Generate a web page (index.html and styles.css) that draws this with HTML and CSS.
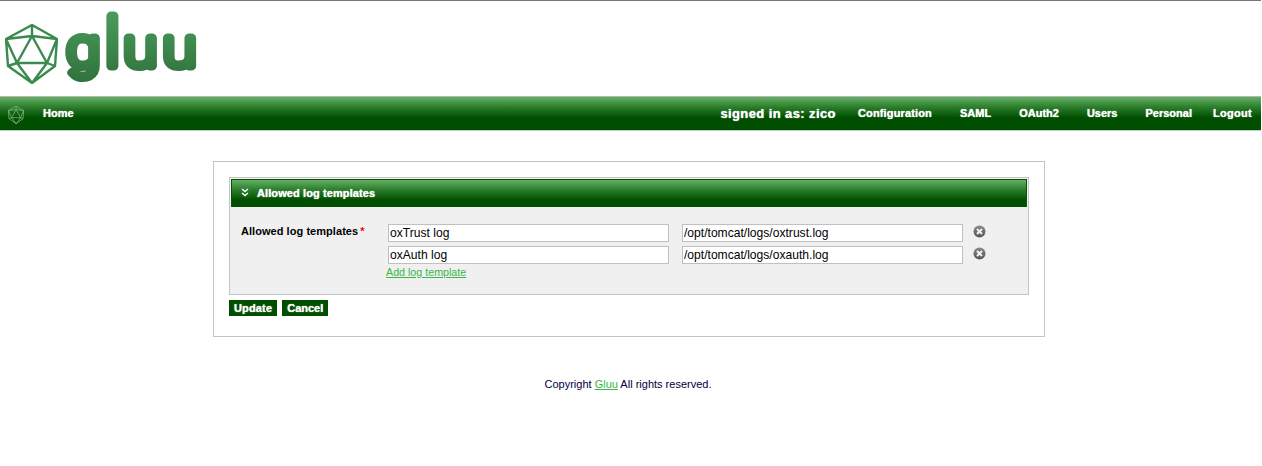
FILE: index.html
```html
<!DOCTYPE html>
<html lang="en">
<head>
<meta charset="utf-8">
<title>Gluu</title>
<link rel="stylesheet" href="styles.css">
</head>
<body>
<svg class="defs" width="0" height="0" aria-hidden="true">
  <defs>
    <linearGradient id="logoGrad" gradientUnits="userSpaceOnUse" x1="0" y1="10" x2="0" y2="86">
      <stop offset="0" stop-color="#4a9c5c"/>
      <stop offset="1" stop-color="#2f6f3a"/>
    </linearGradient>
    <linearGradient id="delGrad" x1="0" y1="0" x2="0" y2="1">
      <stop offset="0" stop-color="#8a8a8a"/>
      <stop offset="1" stop-color="#555"/>
    </linearGradient>
    <symbol id="ico" viewBox="5 23 53 60">
      <path d="M32 24 57 38 55 65 32 82 8 65 6 38Z M32 24V35 M6 38 32 35 57 38 M32 35 17 62H47L32 35 M6 38 17 62 8 65 M57 38 47 62 55 65 M17 62 32 82 47 62" fill="none" stroke="currentColor" stroke-linejoin="round"/>
    </symbol>
    <symbol id="del" viewBox="0 0 13 13">
      <circle cx="6.500" cy="6.500" r="6" fill="url(#delGrad)"/>
      <path d="M4 4 9 9M9 4 4 9" stroke="#f2f2f2" stroke-width="2"/>
    </symbol>
  </defs>
</svg>
<div class="page">
  <header class="brand">
    <svg class="brand-icon" width="53" height="60"><use href="#ico"/></svg>
    <svg class="brand-word" width="145" height="95" viewBox="0 0 145 95">
      <text x="6 40 57 92" y="65" transform="scale(1.12 1)" class="brand-text">g<tspan class="brand-l">l</tspan>uu</text>
    </svg>
  </header>
  <nav class="nav">
    <svg class="nav-icon" width="16" height="18"><use href="#ico"/></svg>
    <a class="nav-link home" href="#">Home</a>
    <span class="signed">signed in as: zico</span>
    <a class="nav-link cfg" href="#">Configuration</a>
    <a class="nav-link" href="#">SAML</a>
    <a class="nav-link" href="#">OAuth2</a>
    <a class="nav-link" href="#">Users</a>
    <a class="nav-link" href="#">Personal</a>
    <a class="nav-link logout" href="#">Logout</a>
  </nav>
  <main class="panel">
    <section class="box">
      <h2 class="box-head">
        <svg class="chev" width="8" height="9" viewBox="0 0 8 9"><path d="M1 1 4 3.500 7 1M1 5 4 7.500 7 5" fill="none" stroke="#fff" stroke-width="1.400"/></svg>
        Allowed log templates
      </h2>
      <div class="box-body">
        <label class="field-label">Allowed log templates<span class="req">*</span></label>
        <div class="rows">
          <div class="row">
            <input class="text-input" type="text" value="oxTrust log">
            <input class="text-input" type="text" value="/opt/tomcat/logs/oxtrust.log">
            <svg class="del" width="13" height="13"><use href="#del"/></svg>
          </div>
          <div class="row">
            <input class="text-input" type="text" value="oxAuth log">
            <input class="text-input" type="text" value="/opt/tomcat/logs/oxauth.log">
            <svg class="del" width="13" height="13"><use href="#del"/></svg>
          </div>
          <a class="add-link" href="#">Add log template</a>
        </div>
      </div>
    </section>
    <div class="actions">
      <button class="btn" type="button">Update</button>
      <button class="btn" type="button">Cancel</button>
    </div>
  </main>
  <footer class="foot">Copyright <a href="#">Gluu</a> All rights reserved.</footer>
</div>
</body>
</html>
```
FILE: styles.css
```css
* { box-sizing: border-box; }
html, body { margin: 0; padding: 0; background: #fff; }
body { font-family: "Liberation Sans", Arial, sans-serif; font-size: 11px; color: #000; height: 466px; overflow: hidden; }
.defs { display: block; height: 0; }
.page { width: 1261px; height: 466px; border-top: 1px solid #777; }
.brand { height: 95px; display: flex; align-items: flex-start; color: #3b8a4e; }
.brand-icon { margin: 23px 0 0 5px; flex: none; stroke-width: 2.4px; }
.brand-word { margin: 0 0 0 2px; flex: none; overflow: visible; }
.brand-text { font-family: Roboto, sans-serif; font-weight: 100; font-size: 54px; fill: url(#logoGrad); stroke: url(#logoGrad); stroke-width: 9px; stroke-linejoin: round; stroke-linecap: round; }
.brand-l { font-size: 66px; }
.nav { height: 35px; display: flex; align-items: center; background: linear-gradient(#66b066 0, #2c7f2c 30%, #004f00 62%, #004f00 100%); border-top: 1px solid #b5b5b5; border-bottom: 1px solid #c9c9c9; padding-bottom: 2px; }
.nav-icon { margin: 4px 0 0 8px; color: #7fb58a; flex: none; stroke-width: 2.5px; }
.nav-link { color: #fff; font-weight: 700; font-size: 11px; text-decoration: none; text-shadow: 0 0 1px #fff; margin-left: 28px; }
.nav-link.home { margin-left: 19px; }
.nav-link.logout { margin-left: 21px; margin-right: 9px; letter-spacing: .3px; }
.signed { margin-left: auto; margin-top: 2px; color: #fff; font-weight: 700; font-size: 13px; text-shadow: 0 0 1px #fff; letter-spacing: .4px; }
.nav-link.cfg { margin-left: 22px; letter-spacing: .15px; }
.panel { width: 832px; height: 176px; margin: 30px 0 0 213px; border: 1px solid #c4c4c4; padding: 15px; }
.box { height: 118px; background: #f0f0f0; border: 1px solid #c4c4c4; padding: 1px 1px 0; }
.box-head { margin: 0; height: 28px; display: flex; align-items: center; gap: 8px; padding: 0 0 2px 9px; color: #fff; font-size: 11px; font-weight: 700; text-shadow: 0 0 1px #fff; letter-spacing: .1px; background: linear-gradient(#66b066 0, #2c7f2c 35%, #004f00 75%); border: 1px solid #0a520a; border-bottom: 0; }
.box-body { display: flex; padding: 17px 0 0 10px; }
.field-label { width: 147px; font-weight: 700; font-size: 11px; letter-spacing: .05px; padding-top: 1px; }
.req { color: #e00; margin-left: 2px; }
.rows { display: flex; flex-direction: column; gap: 4px; }
.row { display: flex; align-items: flex-start; }
.text-input { width: 281px; height: 18px; border: 1px solid #c0c0c0; background: #fff; font: 12.100px "Liberation Sans", Arial, sans-serif; color: #000; padding: 0 1px 1px; margin-right: 13px; outline: none; border-radius: 0; }
.text-input + .text-input { margin-right: 10px; }
.del { margin-top: 1px; flex: none; }
.add-link { color: #3cb54a; font-size: 10.700px; margin: -2px 0 0 -2px; }
.actions { display: flex; gap: 5px; margin-top: 5px; }
.btn { height: 16px; padding: 0 5px; border: 0; border-radius: 0; background: #004f00; color: #fff; font: 700 11px "Liberation Sans", Arial, sans-serif; text-shadow: 0 0 1px #fff; }
.btn:first-child { letter-spacing: .15px; }
.foot { width: 830px; margin: 41px 0 0 213px; text-align: center; font-size: 11px; color: #000040; line-height: 13px; }
.foot a { color: #3cb54a; }
```
